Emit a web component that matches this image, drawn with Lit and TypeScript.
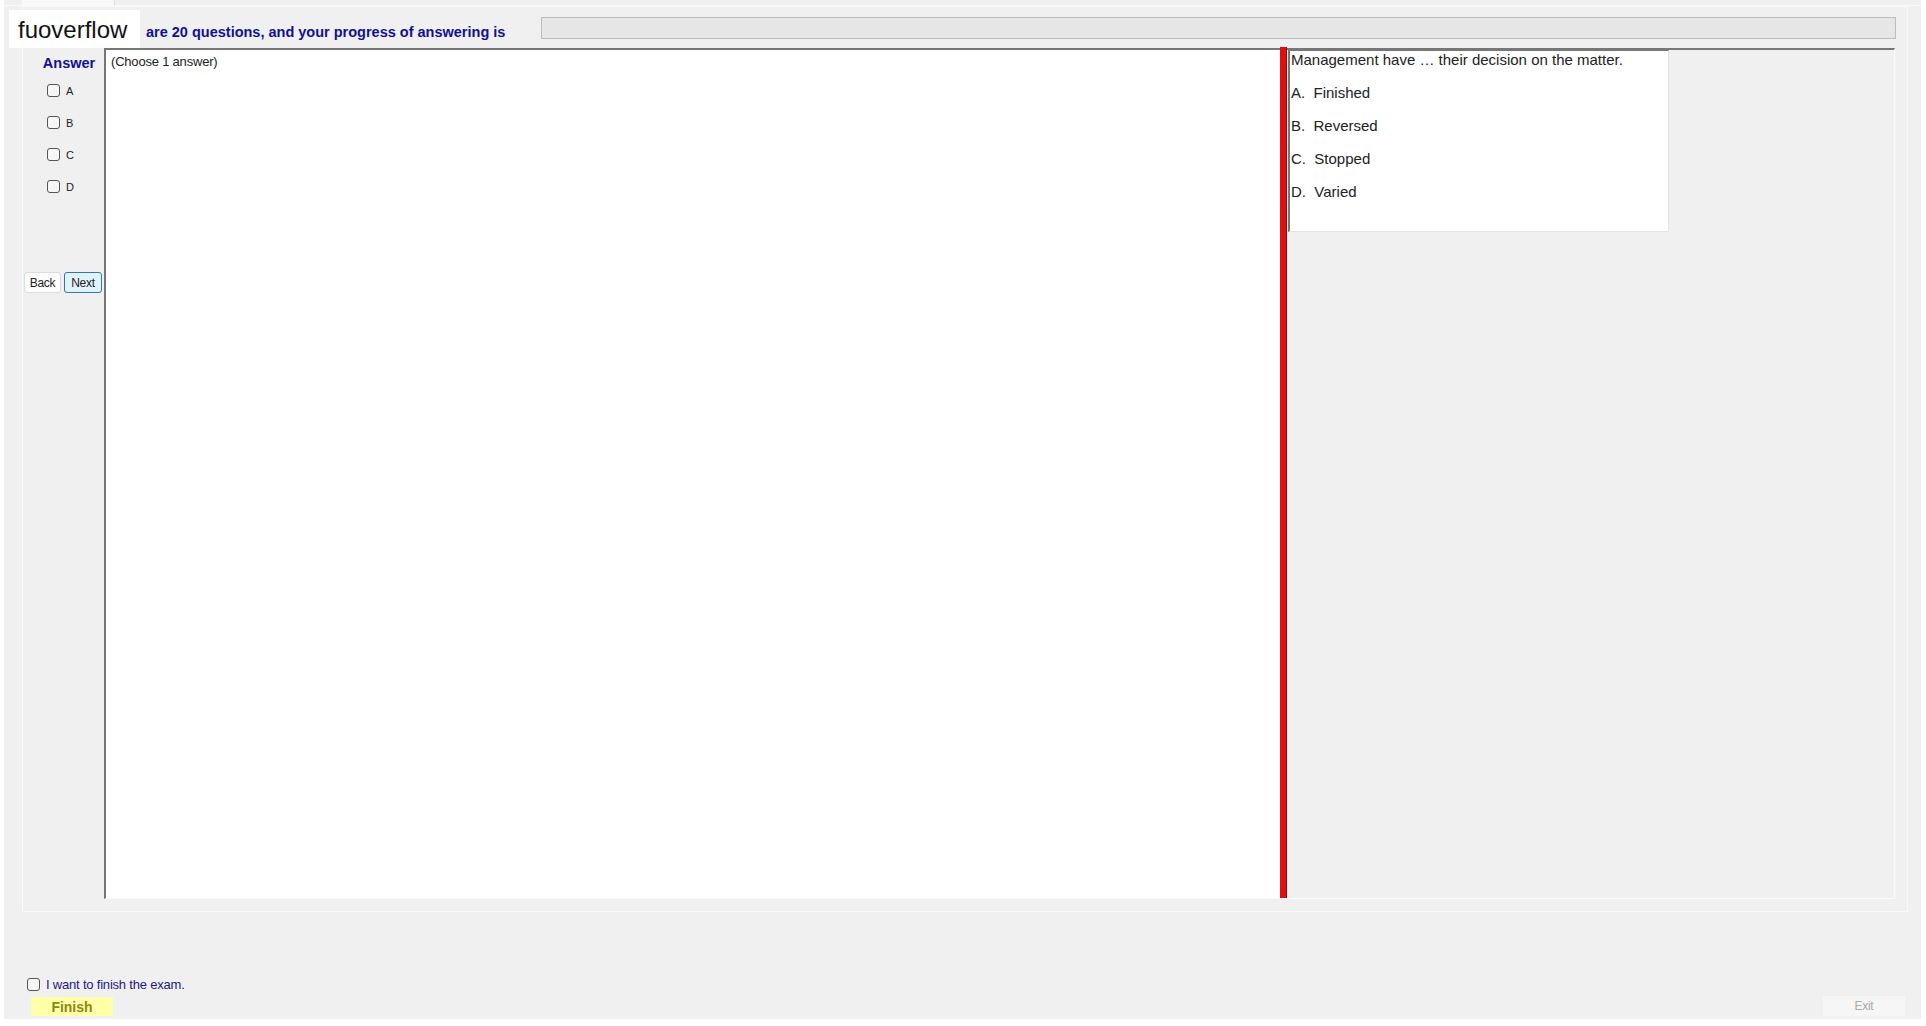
import { LitElement, html, css } from "lit";
import { customElement } from "lit/decorators.js";

const OPTIONS = ["A", "B", "C", "D"];
const ANSWERS = ["A.  Finished", "B.  Reversed", "C.  Stopped", "D.  Varied"];

@customElement("app-root")
export class AppRoot extends LitElement {
  static styles = css`
    :host {
      display: block;
      position: relative;
      width: 1926px;
      height: 1026px;
      background: #ffffff;
      overflow: hidden;
      font-family: "Liberation Sans", Arial, sans-serif;
      color: #111;
    }
    * { box-sizing: border-box; }
    .window {
      margin-left: 4px;
      width: 1917px;
      height: 1019px;
      background: #f0f0f0;
      display: flex;
      flex-direction: column;
    }
    .tabs { height: 6px; padding-left: 18px; flex: none; border-bottom: 1px solid #f8f8f8; }
    .tab { width: 93px; height: 6px; background: #f9f9f9; border-right: 1px solid #e2e2e2; }
    .frame {
      margin-left: 18px;
      width: 1886px;
      height: 906px;
      flex: none;
      border: 1px solid #f9f9f9;
      display: flex;
      flex-direction: column;
    }
    .head { height: 41px; flex: none; display: flex; padding: 10px 11px 0 123px; }
    .intro {
      font-size: 14.5px;
      font-weight: 700;
      line-height: 30px;
      color: #10109a;
      height: 30px;
      margin-top: 0;
      white-space: nowrap;
    }
    .progress {
      margin-left: auto;
      width: 1355px;
      height: 22px;
      background: #e6e6e6;
      border: 1px solid #bcbcbc;
    }
    .body { flex: none; height: 851px; display: flex; }
    .side { width: 81px; flex: none; padding-top: 7px; display: flex; flex-direction: column; }
    .answer {
      font-size: 14.5px;
      font-weight: 700;
      line-height: 16px;
      color: #10109a;
      text-align: center;
      padding-left: 11px;
    }
    .checks {
      margin-top: 13px;
      padding-left: 24px;
      display: flex;
      flex-direction: column;
      gap: 19px;
    }
    .check { display: flex; align-items: center; gap: 6px; height: 13px; font-size: 11px; color: #222; }
    input {
      appearance: none;
      width: 13px;
      height: 13px;
      margin: 0;
      flex: none;
      background: #f6f6f6;
      border: 1px solid #555;
      border-radius: 3px;
    }
    .nav { margin-top: 79px; padding-left: 1px; display: flex; gap: 3px; }
    button {
      font-family: inherit;
      font-size: 12px;
      letter-spacing: -0.3px;
      padding: 0;
      height: 21px;
      border-radius: 3px;
      color: #222;
    }
    .back { width: 37px; background: #fdfdfd; border: 1px solid #dcdcdc; }
    .next { width: 38px; background: #e1f2fb; border: 1px solid #2b7ba6; }
    .main {
      flex: none;
      width: 1791px;
      display: flex;
      border-top: 2px solid #777;
      border-left: 2px solid #777;
      border-right: 1px solid #fbfbfb;
      border-bottom: 1px solid #fbfbfb;
    }
    .sheet {
      flex: none;
      width: 1174px;
      background: #fff;
      padding: 4px 5px;
      font-size: 13px;
      line-height: 16px;
      letter-spacing: -0.2px;
      color: #222;
    }
    .red {
      flex: none;
      width: 7px;
      margin-top: -3px;
      background: #e01010;
      border-right: 1px solid #7a1010;
    }
    .right { flex: 1; padding-left: 1px; }
    .question {
      width: 381px;
      height: 182px;
      background: #fff;
      border-top: 1px solid #777;
      border-left: 2px solid #777;
      border-right: 1px solid #e4e4e4;
      border-bottom: 1px solid #e4e4e4;
      padding-left: 1px;
      display: flex;
      flex-direction: column;
      gap: 15px;
      font-size: 15px;
      line-height: 18px;
      color: #222;
    }
    .question div { white-space: pre; }
    .foot {
      flex: 1;
      display: flex;
      flex-direction: column;
      justify-content: flex-end;
      padding: 0 16px 3px 23px;
    }
    .agree {
      display: flex;
      align-items: center;
      gap: 6px;
      height: 14px;
      margin-bottom: 5px;
      font-size: 13px;
      letter-spacing: -0.2px;
      color: #1a1a80;
    }
    .actions { display: flex; justify-content: space-between; align-items: flex-end; padding-left: 4px; }
    .finish {
      width: 82px;
      height: 19px;
      background: #ffffa8;
      border: none;
      border-radius: 0;
      font-size: 14px;
      letter-spacing: 0;
      font-weight: 700;
      color: #8a8a10;
    }
    .exit {
      width: 82px;
      height: 20px;
      background: #f6f6f6;
      border: none;
      border-radius: 0;
      color: #aaa;
      font-size: 12px;
    }
    .mark {
      position: absolute;
      left: 9px;
      top: 10px;
      width: 131px;
      height: 38px;
      padding-left: 9px;
      background: #fff;
      font-size: 24px;
      line-height: 40px;
      color: #111;
    }
  `;

  render() {
    return html`
      <div class="window">
        <div class="tabs"><div class="tab"></div></div>
        <div class="frame">
          <div class="head">
            <span class="intro">are 20 questions, and your progress of answering is</span>
            <div class="progress"></div>
          </div>
          <div class="body">
            <div class="side">
              <div class="answer">Answer</div>
              <div class="checks">
                ${OPTIONS.map((o) => html`<label class="check"><input type="checkbox" />${o}</label>`)}
              </div>
              <div class="nav">
                <button class="back">Back</button>
                <button class="next">Next</button>
              </div>
            </div>
            <div class="main">
              <div class="sheet">(Choose 1 answer)</div>
              <div class="red"></div>
              <div class="right">
                <div class="question">
                  <div>Management have … their decision on the matter.</div>
                  ${ANSWERS.map((a) => html`<div>${a}</div>`)}
                </div>
              </div>
            </div>
          </div>
        </div>
        <div class="foot">
          <label class="agree"><input type="checkbox" />I want to finish the exam.</label>
          <div class="actions">
            <button class="finish">Finish</button>
            <button class="exit" disabled>Exit</button>
          </div>
        </div>
      </div>
      <div class="mark">fuoverflow</div>
    `;
  }
}
